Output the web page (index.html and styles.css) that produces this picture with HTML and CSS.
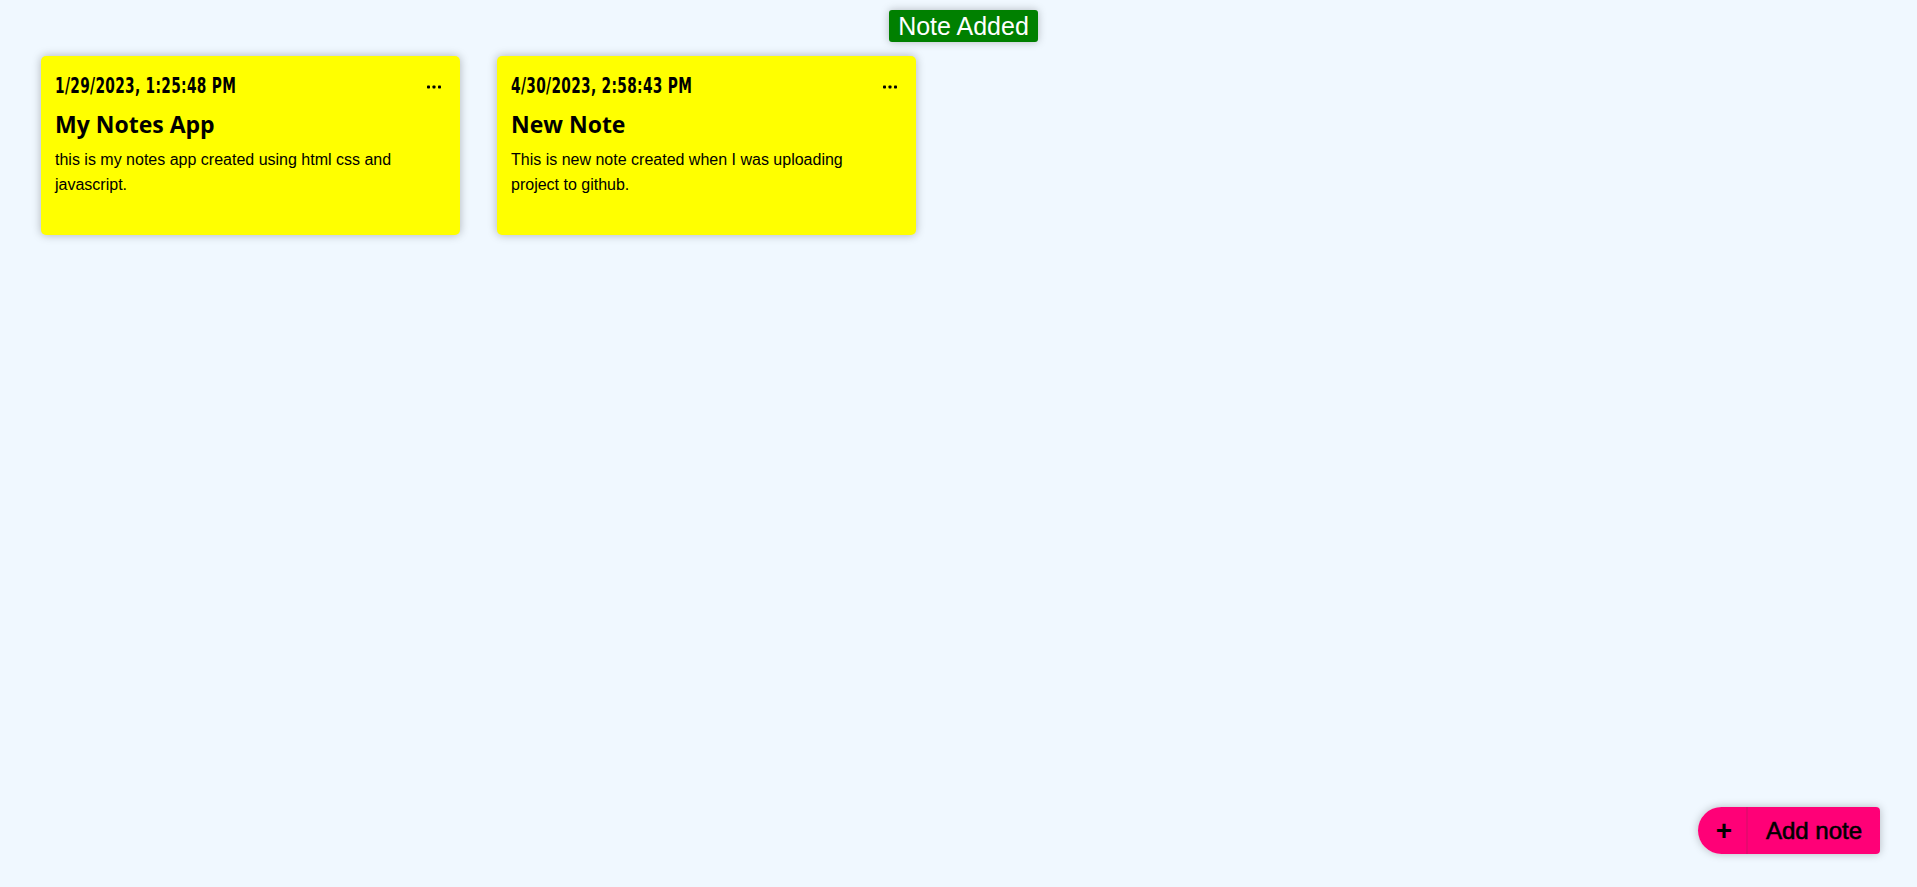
FILE: index.html
```html
<!DOCTYPE html>
<html lang="en">
<head>
<meta charset="utf-8">
<title>Notes App</title>
<link rel="stylesheet" href="styles.css">
</head>
<body>
<div class="toast">Note Added</div>
<main class="notes">
  <article class="note">
    <div class="note-head">
      <span class="note-date">1/29/2023, 1:25:48 PM</span>
      <svg class="note-menu" width="14" height="4" viewBox="0 0 14 4"><rect x="0" y="0.5" width="3" height="3" rx="0.8"/><rect x="5.5" y="0.5" width="3" height="3" rx="0.8"/><rect x="11" y="0.5" width="3" height="3" rx="0.8"/></svg>
    </div>
    <h2 class="note-title">My Notes App</h2>
    <p class="note-body">this is my notes app created using html css and javascript.</p>
  </article>
  <article class="note">
    <div class="note-head">
      <span class="note-date">4/30/2023, 2:58:43 PM</span>
      <svg class="note-menu" width="14" height="4" viewBox="0 0 14 4"><rect x="0" y="0.5" width="3" height="3" rx="0.8"/><rect x="5.5" y="0.5" width="3" height="3" rx="0.8"/><rect x="11" y="0.5" width="3" height="3" rx="0.8"/></svg>
    </div>
    <h2 class="note-title">New Note</h2>
    <p class="note-body">This is new note created when I was uploading project to github.</p>
  </article>
</main>
<button class="add-btn"><span class="add-plus">+</span><span class="add-label">Add note</span></button>
</body>
</html>
```
FILE: styles.css
```css
html, body {
  margin: 0;
  padding: 0;
}
body {
  background: #f0f8ff;
  min-height: 887px;
  font-family: "Liberation Sans", Arial, sans-serif;
  color: #000;
}
.toast {
  position: absolute;
  top: 10px;
  left: 889px;
  width: 149px;
  height: 32px;
  box-sizing: border-box;
  background: #008000;
  color: #fff;
  border-radius: 3px;
  font-family: "Liberation Sans", sans-serif;
  font-size: 25px;
  line-height: 32px;
  text-align: center;
  box-shadow: 0 0 8px rgba(0,0,0,0.25);
}
.notes {
  display: flex;
  flex-wrap: wrap;
  gap: 37px;
  padding: 56px 41px;
}
.note {
  width: 419px;
  height: 179px;
  box-sizing: border-box;
  background: #ffff00;
  border-radius: 5px;
  box-shadow: 0 0 10px rgba(0,0,0,0.28);
  padding: 16px 19px 0 14px;
}
.note-head {
  display: flex;
  justify-content: space-between;
  align-items: center;
  height: 28px;
}
.note-date {
  display: inline-block;
  font-family: "DejaVu Sans", sans-serif;
  font-weight: 700;
  font-size: 20.5px;
  letter-spacing: 0.5px;
  transform: scaleX(0.67);
  transform-origin: left center;
  white-space: nowrap;
}
.note-menu {
  display: block;
  fill: #000;
  margin-top: 2px;
}
.note-title {
  margin: 9px 0 0;
  font-family: "Open Sans", sans-serif;
  font-weight: 700;
  font-size: 23px;
  line-height: 30px;
}
.note-body {
  margin: 8px 0 0;
  font-size: 16px;
  line-height: 25px;
  width: 350px;
}
.add-btn {
  position: fixed;
  right: 37px;
  bottom: 33px;
  display: flex;
  height: 47px;
  padding: 0;
  border: none;
  background: none;
  box-shadow: 0 0 8px rgba(0,0,0,0.25);
  border-radius: 24px 4px 4px 24px;
  font-family: "Liberation Sans", sans-serif;
  color: #000;
}
.add-plus {
  width: 44px;
  background: #ff0077;
  border-radius: 24px 0 0 24px;
  border-right: 2px solid #e8086f;
  font-size: 28px;
  font-weight: 700;
  line-height: 47px;
  text-align: center;
  padding-left: 4px;
  box-sizing: content-box;
}
.add-label {
  width: 132px;
  background: #ff0077;
  border-radius: 0 4px 4px 0;
  font-size: 24px;
  line-height: 47px;
  text-align: center;
  -webkit-text-stroke: 0.6px #000;
}
```
